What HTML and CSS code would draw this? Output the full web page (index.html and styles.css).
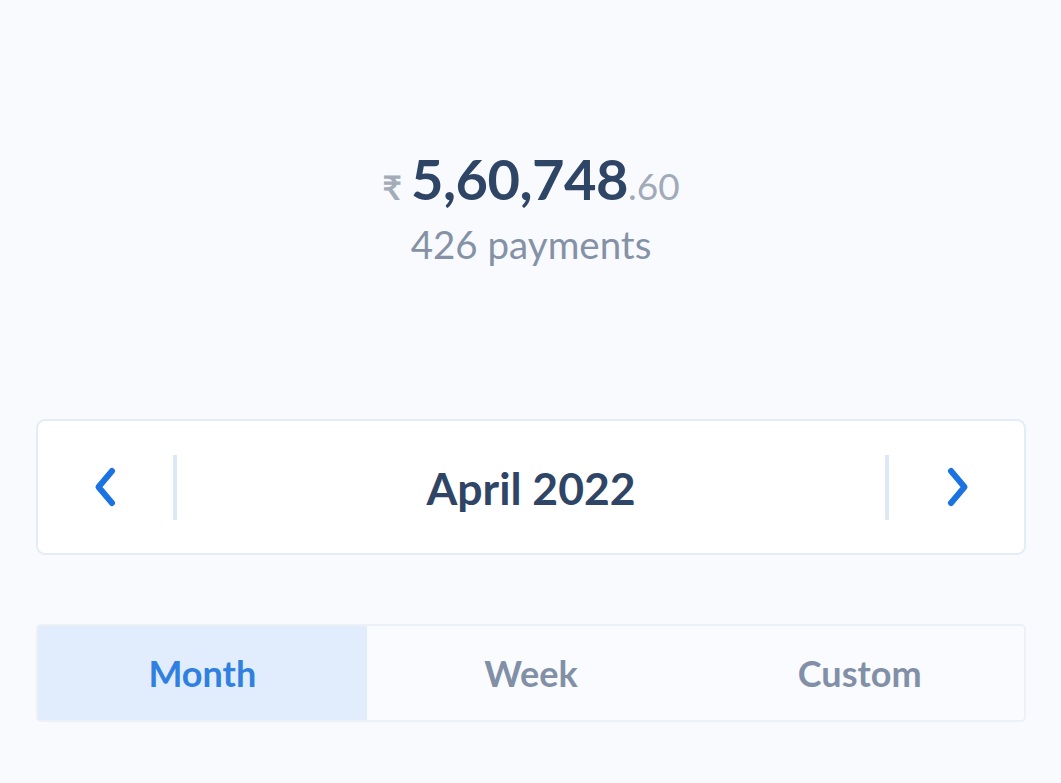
FILE: index.html
```html
<!DOCTYPE html>
<html>
<head>
<meta charset="utf-8">
<link rel="stylesheet" href="styles.css">
</head>
<body>
<div class="page">
  <div class="summary">
    <div class="amount"><span class="currency">₹</span><span class="whole">5,60,748</span><span class="fraction">.60</span></div>
    <div class="count">426 payments</div>
  </div>
  <div class="period">
    <div class="nav">
      <svg width="30" height="44" viewBox="0 0 30 44"><path d="M21 6 L7.5 22 L21 38" fill="none" stroke="#1a73e0" stroke-width="6" stroke-linecap="round" stroke-linejoin="round"/></svg>
    </div>
    <div class="sep"></div>
    <div class="label">April 2022</div>
    <div class="sep"></div>
    <div class="nav">
      <svg width="30" height="44" viewBox="0 0 30 44"><path d="M9 6 L22.5 22 L9 38" fill="none" stroke="#1a73e0" stroke-width="6" stroke-linecap="round" stroke-linejoin="round"/></svg>
    </div>
  </div>
  <div class="tabs">
    <div class="tab active">Month</div>
    <div class="tab">Week</div>
    <div class="tab">Custom</div>
  </div>
</div>
</body>
</html>
```
FILE: styles.css
```css
html, body {
  margin: 0;
  padding: 0;
  background: #f8fafe;
  font-family: Lato, "Open Sans", sans-serif;
}
.page {
  padding: 0 35px 0 36px;
  height: 783px;
  box-sizing: border-box;
}
.summary {
  padding-top: 146px;
  display: flex;
  flex-direction: column;
  align-items: center;
}
.amount {
  display: flex;
  align-items: baseline;
  line-height: 66px;
}
.currency {
  font-size: 34px;
  font-weight: 700;
  color: #a3acb9;
  margin-right: 9px;
}
.whole {
  font-size: 56px;
  font-weight: 700;
  color: #2f4565;
  letter-spacing: -0.5px;
}
.fraction {
  font-size: 37px;
  font-weight: 400;
  color: #a0aab8;
}
.count {
  font-size: 38.5px;
  color: #8592a6;
  line-height: 44px;
  margin-top: 2px;
}
.period {
  margin-top: 153px;
  height: 136px;
  box-sizing: border-box;
  background: #fff;
  border: 2px solid #e4ecf7;
  border-radius: 9px;
  display: flex;
  align-items: center;
}
.nav {
  width: 135px;
  display: flex;
  justify-content: center;
  align-items: center;
}
.sep {
  width: 4px;
  height: 65px;
  background: #dde8f6;
}
.label {
  flex: 1;
  text-align: center;
  font-size: 44.5px;
  font-weight: 700;
  color: #2f4565;
}
.tabs {
  margin-top: 69px;
  height: 98px;
  box-sizing: border-box;
  border: 2px solid #edf1f7;
  border-radius: 5px;
  display: flex;
  background: #f9fbfe;
}
.tab {
  flex: 1;
  display: flex;
  align-items: center;
  justify-content: center;
  font-size: 36px;
  font-weight: 700;
  color: #8190a6;
}
.tab.active {
  background: #e1edfc;
  color: #2f80e0;
}
```
